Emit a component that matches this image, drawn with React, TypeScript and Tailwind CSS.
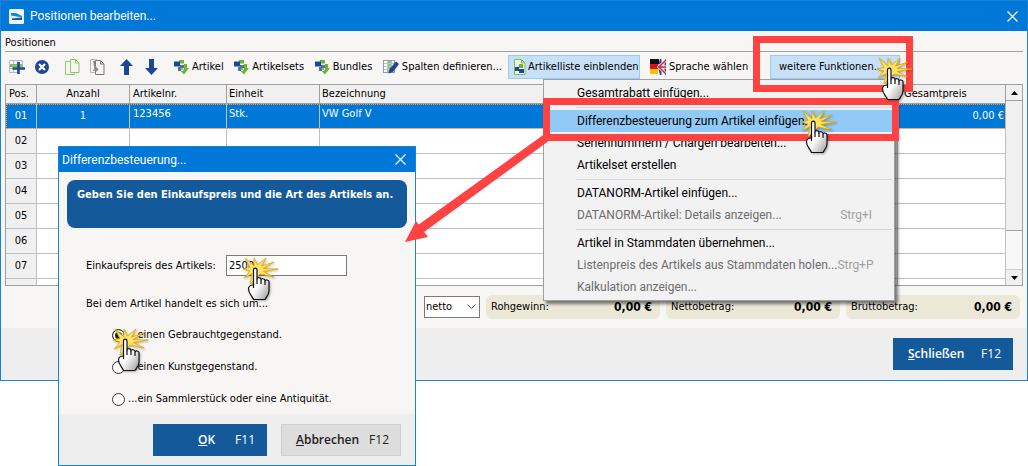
import type { ReactNode } from "react";

const rows = ["02", "03", "04", "05", "06", "07", ""];

const totals = ["Rohgewinn:", "Nettobetrag:", "Bruttobetrag:"];

function Cross() {
  return (
    <svg width="11" height="11" viewBox="0 0 11 11" fill="none" stroke="#fff" strokeWidth="1.200">
      <path d="M0.500 0.500 10.500 10.500M10.500 0.500 0.500 10.500" />
    </svg>
  );
}

function AppLogo() {
  return (
    <svg width="15" height="15" viewBox="0 0 15 15">
      <rect width="15" height="15" rx="1.500" fill="#eef6fb" />
      <path d="M2 4h5l6 3v1.500L2 6.500z" fill="#1b86c9" />
      <path d="M3 9.500 13 8.500V11H3z" fill="#0d5d9c" />
    </svg>
  );
}

function AddIcon() {
  return (
    <svg width="16" height="16" viewBox="0 0 16 16" fill="none">
      <path d="M0.500 1.500h13M0.500 5.500h13M0.500 9.500h13M0.500 13.500h8M0.500 1.500v12M4.500 1.500v12M8.500 1.500v12M13.500 1.500v8" stroke="#b3bcc9" />
      <path d="M1 5h12v3H1z" fill="#7cc34b" />
      <path d="M9.500 3v12M3.500 9.500H16" stroke="#1d4796" strokeWidth="2.600" />
    </svg>
  );
}

function DeleteIcon() {
  return (
    <svg width="14" height="14" viewBox="0 0 14 14">
      <circle cx="7" cy="7" r="7" fill="#1d4796" />
      <path d="m4 4 6 6m0-6-6 6" stroke="#fff" strokeWidth="2.200" />
    </svg>
  );
}

function CopyIcon() {
  return (
    <svg width="15" height="16" viewBox="0 0 15 16" fill="#f7f6f5" stroke="#8ccb63">
      <path d="M0.500 2.500h6l3 3v10h-9z" />
      <path d="M5.500 0.500h5l3.500 3.500v9.500H5.500z" />
      <path d="M10.500 0.500V4H14" fill="none" />
    </svg>
  );
}

function PasteIcon() {
  return (
    <svg width="15" height="16" viewBox="0 0 15 16" fill="#f7f6f5" stroke="#777">
      <path d="M0.500 0.500h6l2 2v11h-8z" stroke="#b5b5b5" />
      <path d="M5.500 1.500h5l3.500 3.500v10.500H5.500z" />
      <path d="M10.500 1.500V5H14" fill="none" />
      <path d="M3 2h2v4.500l3.500 4-3.500 3.500v-2H3l1.500-2z" fill="#8a8a8a" stroke="none" />
    </svg>
  );
}

function ArrowIcon({ down }: { down?: boolean }) {
  return (
    <svg width="13" height="16" viewBox="0 0 13 16" className={down ? "rotate-180" : ""}>
      <path d="M6.500 0 13 7H9v9H4V7H0z" fill="#1d4796" />
    </svg>
  );
}

function InsertIcon() {
  return (
    <svg width="15" height="15" viewBox="0 0 15 15" className="shrink-0">
      <path d="M5 0h5v3.500H5z" fill="#6db52f" />
      <path d="M10 4h3v4h2l-5 6.500L6.500 11H9l1-2.500z" fill="#6db52f" />
      <path d="M0 1.500h6v5H0z" fill="#1d4796" />
      <path d="M6 5h4v3H6zM4 7h3v4H4z" fill="#4f6fb0" />
      <path d="M7 8h2v2H7z" fill="#8ccb63" />
    </svg>
  );
}

function ColumnsIcon() {
  return (
    <svg width="16" height="14" viewBox="0 0 16 14" className="shrink-0">
      <rect x="0.500" y="0.500" width="11" height="12" fill="#fff" stroke="#8e9bb0" />
      <path d="M4.500 1H8v11H4.500z" fill="#8ccb63" />
      <path d="M1 3.500h10M1 6.500h10M1 9.500h10M4.500 1v11M8.500 1v11" stroke="#b7c0cf" />
      <path d="m6.500 9-1 4.500 4.500-1.500L16 4l-3-2.500z" fill="#1d4796" />
    </svg>
  );
}

function ListIcon() {
  return (
    <svg width="12" height="16" viewBox="0 0 12 16" className="shrink-0">
      <path d="M0.500 0.500h7l3.500 3.500v11.500H0.500z" fill="#eef7ea" stroke="#7ebf4e" />
      <path d="M7.500 0.500V4H11" fill="none" stroke="#7ebf4e" />
      <path d="M5 5h4v4H5z" fill="#6db52f" />
      <rect x="1" y="8" width="4" height="4" fill="#1d4796" />
      <rect x="5" y="10" width="5" height="4" fill="#1d4796" />
    </svg>
  );
}

function FlagIcon() {
  return (
    <svg width="16" height="16" viewBox="0 0 16 16" className="shrink-0">
      <path d="M0 0h9v5H0z" fill="#111" />
      <path d="M0 5h8v5H0z" fill="#d8121a" />
      <path d="M0 10h8v5H0z" fill="#f5c400" />
      <path d="M10 0h6v16h-6L8 8z" fill="#26408f" />
      <path d="M16 1 9 8l7 7M13 0v16M8 8h8" stroke="#fff" strokeWidth="3" fill="none" />
      <path d="M16 1 9 8l7 7M8 8h8" stroke="#d22234" strokeWidth="1.500" fill="none" />
    </svg>
  );
}

/** hand pointer with the yellow click burst */
function Pointer({ className }: { className: string }) {
  return (
    <svg
      className={"absolute z-40 pointer-events-none drop-shadow-[1px_1px_1px_rgba(0,0,0,0.3)] " + className}
      width="36"
      height="44"
      viewBox="0 0 36 44"
    >
      <defs>
        <linearGradient id="hand" x1="0" y1="0" x2="1" y2="1">
          <stop offset="0.500" stopColor="#fff" />
          <stop offset="1" stopColor="#999" />
        </linearGradient>
      </defs>
      <path
        d="M2 1 11 9 11 1 14.500 8 23 1 18.500 9 31 5 20 11.500 35 12 20 14.500 31 20 17 17 7 27 9 16.500 1 21 7 14 0 12 7 10.500z"
        fill="#fde468"
        stroke="#e3a400"
        strokeWidth="0.800"
        strokeLinejoin="round"
      />
      <path
        d="M10.500 28V13c0-2.500 3.500-2.500 3.500 0v9c0-2 4-2 4 .5v.5c0-2 4-1.500 4 .5v.5c0-1.500 4-1.500 4 .8V34c0 4-2.500 5.500-4 8.500H10.500c-1-3.500-5-6-5-10.500 0-3 2-4 5-4z"
        fill="url(#hand)"
        stroke="#111"
        strokeWidth="1.200"
        strokeLinejoin="round"
      />
      <path d="M14 22v5M18 23v4M22 24v4M10.500 26v5" stroke="#111" strokeWidth="1.200" />
    </svg>
  );
}

function ToolButton({ icon, children }: { icon: ReactNode; children: string }) {
  return (
    <button className="flex shrink-0 items-center gap-[3px] h-6 whitespace-nowrap">
      {icon}
      {children}
    </button>
  );
}

function MenuItem({ label, keys, disabled, active }: { label: string; keys?: string; disabled?: boolean; active?: boolean }) {
  return (
    <button
      disabled={disabled}
      className={
        "flex w-full items-center justify-between h-[22px] pl-[31px] pr-5 whitespace-nowrap disabled:text-[#6d6d6d] " +
        (active ? "bg-[#91c9f7]" : "")
      }
    >
      <span>{label}</span>
      {keys && <span className="text-[#a0a0a0]">{keys}</span>}
    </button>
  );
}

function Separator() {
  return <div className="h-px mt-[3px] mb-[2px] ml-[30px] bg-[#d7d7d7]" />;
}

function FunctionMenu() {
  return (
    <div className="absolute z-10 left-[543px] top-[79px] w-[352px] border border-[#a0a0a0] bg-[#f2f2f2] p-0.5 font-['Roboto',sans-serif] text-[12px] leading-4 text-black shadow-[3px_3px_3px_rgba(0,0,0,0.5)]">
      <MenuItem label="Gesamtrabatt einfügen..." />
      <Separator />
      <MenuItem label="Differenzbesteuerung zum Artikel einfügen..." active />
      <MenuItem label="Seriennummern / Chargen bearbeiten..." />
      <MenuItem label="Artikelset erstellen" />
      <Separator />
      <MenuItem label="DATANORM-Artikel einfügen..." />
      <MenuItem label="DATANORM-Artikel: Details anzeigen..." keys="Strg+I" disabled />
      <Separator />
      <MenuItem label="Artikel in Stammdaten übernehmen..." />
      <MenuItem label="Listenpreis des Artikels aus Stammdaten holen..." keys="Strg+P" disabled />
      <MenuItem label="Kalkulation anzeigen..." disabled />
    </div>
  );
}

function Choice({ label, checked }: { label: string; checked?: boolean }) {
  return (
    <label className="flex items-center gap-[3px] h-5">
      <input
        type="radio"
        name="art"
        defaultChecked={checked}
        className="appearance-none size-[13px] rounded-full border border-[#333] bg-white checked:bg-[#222] checked:shadow-[inset_0_0_0_2px_#fff]"
      />
      {label}
    </label>
  );
}

function TaxDialog() {
  return (
    <div className="absolute z-20 left-[58px] top-[146px] w-[358px] border border-[#1883d7] bg-[#f7f6f5]">
      <div className="flex items-center justify-between h-[25px] pl-[3px] pr-[9px] bg-[#0078d7] text-white font-['Roboto',sans-serif] text-[12px]">
        <span>Differenzbesteuerung...</span>
        <button aria-label="Schließen">
          <Cross />
        </button>
      </div>
      <div className="mx-2 mt-2 h-12 rounded-lg bg-[#145a9b] px-[10px] pt-[7px] text-white font-bold text-[11px] leading-4 whitespace-nowrap">
        Geben Sie den Einkaufspreis und die Art des Artikels an.
      </div>
      <div className="pl-[27px] pt-[27px] pb-[5px]">
        <div className="flex items-center">
          <label htmlFor="preis" className="w-[140px]">
            Einkaufspreis des Artikels:
          </label>
          <input
            id="preis"
            defaultValue="2500"
            className="w-[121px] h-[21px] px-0.5 border border-[#7a7a7a] bg-white"
          />
        </div>
        <p className="mt-[21px]">Bei dem Artikel handelt es sich um...</p>
        <div className="flex flex-col gap-3 pl-[26px] mt-[14px]">
          <Choice label="...einen Gebrauchtgegenstand." checked />
          <Choice label="...einen Kunstgegenstand." />
          <Choice label="...ein Sammlerstück oder eine Antiquität." />
        </div>
      </div>
      <div className="flex justify-end gap-[14px] bg-[#eeeeee] pt-[10px] pb-[9px] pr-[14px] font-['Open_Sans',sans-serif] text-[12px]">
        <button className="flex w-[114px] h-8 items-center justify-end gap-5 pr-3 bg-[#145a9b] text-white">
          <span className="font-semibold">
            <u>O</u>K
          </span>
          <span>F11</span>
        </button>
        <button className="flex w-[120px] h-8 items-center justify-end gap-[10px] pr-[11px] border border-[#cfcfcf] bg-[#dddddd] text-[#222]">
          <span className="font-semibold">
            <u>A</u>bbrechen
          </span>
          <span>F12</span>
        </button>
      </div>
    </div>
  );
}

function PositionTable() {
  const cell = "border-b border-r border-[#c0c0c0] ";
  const head = "border-r border-b border-[#a0a0a0] font-normal ";
  return (
    <div className="flex h-[202px] mx-1 border border-[#a0a0a0] bg-white overflow-hidden">
      <div className="flex-1 overflow-hidden">
        <table className="w-full table-fixed border-separate border-spacing-0">
          <thead>
            <tr className="h-[19px] bg-[#f0f0f0] text-left">
              <th className={head + "w-[31px] pl-[3px]"}>Pos.</th>
              <th className={head + "w-[93px] text-center"}>Anzahl</th>
              <th className={head + "w-[97px] pl-[3px]"}>Artikelnr.</th>
              <th className={head + "w-[93px] pl-[2px]"}>Einheit</th>
              <th className={head + "pl-[2px]"}>Bezeichnung</th>
              <th className={head + "w-[108px] pl-[6px]"}>Gesamtpreis</th>
            </tr>
          </thead>
          <tbody>
            <tr className="h-[25px] bg-[#0078d7] text-white outline-1 outline-dotted -outline-offset-1 outline-[#ff9a3c]">
              <td className={cell + "text-center"}>01</td>
              <td className={cell + "text-center"}>1</td>
              <td className={cell + "pl-[3px] pb-1"}>123456</td>
              <td className={cell + "pl-[2px] pb-1"}>Stk.</td>
              <td className={cell + "pl-[2px] pb-1"}>VW Golf V</td>
              <td className={cell + "text-right pr-px"}>0,00 €</td>
            </tr>
            {rows.map((row) => (
              <tr key={row} className="h-[25px]">
                <td className={cell + "bg-[#f0f0f0] text-center"}>{row}</td>
                <td className={cell} />
                <td className={cell} />
                <td className={cell} />
                <td className={cell} />
                <td className={cell} />
              </tr>
            ))}
          </tbody>
        </table>
      </div>
      {/** scrollbar */}
      <div className="flex w-4 flex-col bg-[#f8f8f8]">
        <button aria-label="nach oben" className="flex h-4 items-center justify-center border-b border-[#a0a0a0] bg-[#f0f0f0]">
          <svg width="7" height="4" viewBox="0 0 7 4">
            <path d="M0 4 3.500 0 7 4z" />
          </svg>
        </button>
        <div className="h-[130px] border-b border-[#a0a0a0] bg-[#f0f0f0]" />
        <div className="flex-1" />
        <button aria-label="nach unten" className="flex h-4 items-center justify-center border-t border-[#d0d0d0] bg-[#f0f0f0]">
          <svg width="7" height="4" viewBox="0 0 7 4">
            <path d="M0 0 3.500 4 7 0z" />
          </svg>
        </button>
      </div>
    </div>
  );
}

export default function App() {
  return (
    <div className="relative min-h-screen bg-white overflow-hidden text-[11px] leading-[14px] text-black font-['DejaVu_Sans_Condensed','DejaVu_Sans',sans-serif]">
      <div className="border border-[#1883d7] bg-[#f7f6f5]">
        <div className="flex items-center h-[30px] pl-2 pr-[9px] bg-[#0078d7] text-white font-['Roboto',sans-serif] text-[12px]">
          <AppLogo />
          <span className="ml-[6px]">Positionen bearbeiten...</span>
          <button aria-label="Schließen" className="ml-auto">
            <Cross />
          </button>
        </div>
        <div className="mx-1 pt-[5px] pb-px border-b border-[#a0a0a0]">Positionen</div>

        {/** toolbar */}
        <div className="flex items-center h-8 pl-2 pb-0.5">
          <div className="flex w-[761px] items-center">
            <button aria-label="Hinzufügen"><AddIcon /></button>
            <button aria-label="Löschen" className="ml-[10px]"><DeleteIcon /></button>
            <button aria-label="Kopieren" className="ml-4"><CopyIcon /></button>
            <button aria-label="Einfügen" className="ml-[10px]"><PasteIcon /></button>
            <button aria-label="Nach oben" className="ml-[15px]"><ArrowIcon /></button>
            <button aria-label="Nach unten" className="ml-3 mr-4"><ArrowIcon down /></button>
            <div className="flex w-[328px] shrink-0 items-center justify-between">
              <ToolButton icon={<InsertIcon />}>Artikel</ToolButton>
              <ToolButton icon={<InsertIcon />}>Artikelsets</ToolButton>
              <ToolButton icon={<InsertIcon />}>Bundles</ToolButton>
              <ToolButton icon={<ColumnsIcon />}>Spalten definieren...</ToolButton>
            </div>
            <button className="ml-[6px] flex w-[132px] h-6 shrink-0 items-center gap-[2px] pl-[5px] border border-[#99cbf5] bg-[#c8e0f7] whitespace-nowrap">
              <ListIcon />
              Artikelliste einblenden
            </button>
            <button className="ml-[10px] flex items-center gap-[3px] whitespace-nowrap">
              <FlagIcon />
              Sprache wählen
            </button>
          </div>
          <button className="w-[130px] h-6 pl-2 text-left border border-[#99cbf5] bg-[#c8e0f7] whitespace-nowrap">
            weitere Funktionen...
          </button>
        </div>

        <PositionTable />

        {/** totals */}
        <div className="flex justify-end gap-[6px] pt-[9px] pb-[9px] pr-[7px]">
          <div className="relative flex items-center">
            <select aria-label="Preisart" className="appearance-none w-[56px] h-[22px] pl-px border border-[#7a7a7a] bg-white">
              <option>netto</option>
            </select>
            <svg className="absolute right-1" width="9" height="6" viewBox="0 0 9 6" fill="none" stroke="#444">
              <path d="m0.500 0.500 4 4 4-4" />
            </svg>
          </div>
          {totals.map((total) => (
            <div key={total} className="flex w-[174px] h-6 items-center justify-between rounded-md bg-[#ebe8d7] pl-[5px] pr-2">
              <span>{total}</span>
              <b className="text-[12px]">0,00 €</b>
            </div>
          ))}
        </div>

        {/** footer */}
        <div className="flex justify-end bg-[#eeeeee] pt-[10px] pb-[10px] pr-[14px] font-['Open_Sans',sans-serif] text-[12px]">
          <button className="flex w-[120px] h-8 items-center justify-between px-3 pl-[15px] bg-[#145a9b] text-white">
            <span className="font-semibold">
              <u>S</u>chließen
            </span>
            <span>F12</span>
          </button>
        </div>
      </div>

      <FunctionMenu />
      <TaxDialog />

      {/** red markers */}
      <div className="absolute z-30 pointer-events-none left-[753px] top-[36px] w-[160px] h-[56px] border-[7px] border-[#ff4343]" />
      <div className="absolute z-30 pointer-events-none left-[543px] top-[98px] w-[356px] h-[43px] border-[7px] border-[#ff4343]" />
      <svg className="absolute z-30 pointer-events-none left-[404px] top-[130px]" width="150" height="114" viewBox="0 0 150 114">
        <path d="M142 3 146 10 20 102 14 95z" fill="#ff4343" />
        <path d="M1 112 12 91 24 107z" fill="#ff4343" />
      </svg>

      <Pointer className="left-[877px] top-[57px]" />
      <Pointer className="left-[801px] top-[110px]" />
      <Pointer className="left-[243px] top-[257px]" />
      <Pointer className="left-[113px] top-[328px]" />
    </div>
  );
}
